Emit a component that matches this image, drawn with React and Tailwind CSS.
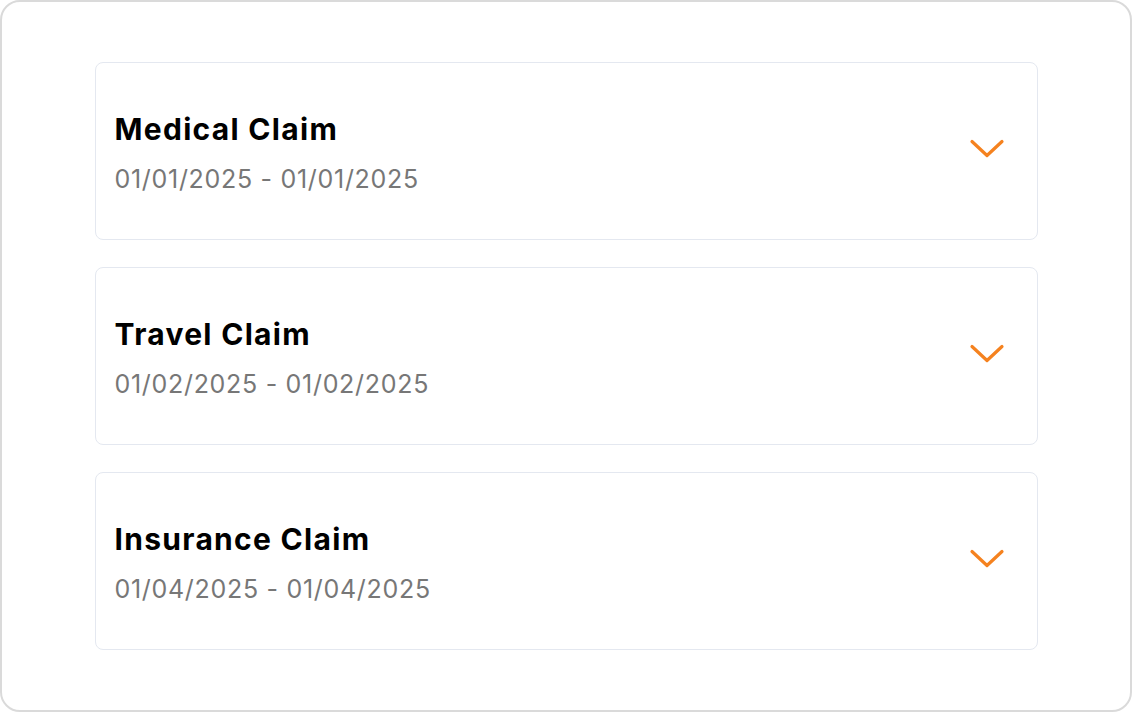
import React from "react";

const claims = [
  { title: "Medical Claim", range: "01/01/2025 - 01/01/2025" },
  { title: "Travel Claim", range: "01/02/2025 - 01/02/2025" },
  { title: "Insurance Claim", range: "01/04/2025 - 01/04/2025" },
];

function Chevron() {
  return (
    <svg width="36" height="22" viewBox="0 0 36 22" fill="none" className="mb-[5px]">
      <path d="M3 3.5 L18 17.5 L33 3.5" stroke="#F5821F" strokeWidth="3.2" strokeLinecap="round" strokeLinejoin="round" />
    </svg>
  );
}

export default function App() {
  return (
    <div className="w-[1132px] h-[712px] bg-white" style={{ fontFamily: "Inter, 'Noto Sans', sans-serif" }}>
      <div className="w-full h-full border-2 border-[#dadada] rounded-[20px] flex flex-col items-center pt-[60px] gap-[27px]">
        {claims.map((c) => (
          <div key={c.title} className="w-[943px] h-[178px] border border-[#e4e8f0] rounded-[8px] flex items-center justify-between pl-[19px] pr-[32px]">
            <div className="flex flex-col mt-[4px]">
              <div className="text-[30px] leading-[36px] font-bold text-black tracking-[1.3px]">{c.title}</div>
              <div className="text-[25px] leading-[32px] mt-[16px] text-[#777777] tracking-[0.7px]">{c.range}</div>
            </div>
            <Chevron />
          </div>
        ))}
      </div>
    </div>
  );
}
